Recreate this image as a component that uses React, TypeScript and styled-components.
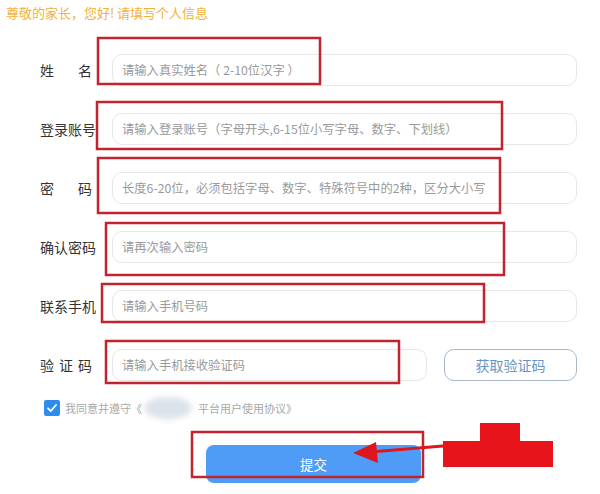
import React from "react";
import styled, { createGlobalStyle } from "styled-components";

const Global = createGlobalStyle`
  html, body { margin: 0; padding: 0; background: #fff; }
  body { font-family: "Noto Sans CJK SC", "Noto Sans", sans-serif; }
`;

const Page = styled.div`
  position: relative;
  width: 600px;
  height: 494px;
  overflow: hidden;
  background: #fff;
`;

const Header = styled.div`
  height: 26px;
  line-height: 26px;
  padding-left: 6px;
  font-size: 13px;
  color: #f2b13c;
  white-space: nowrap;
`;

const Form = styled.div`
  display: flex;
  flex-direction: column;
  gap: 27px;
  padding-top: 28px;
`;

const Row = styled.div`
  display: flex;
  align-items: center;
  height: 32px;
`;

const Label = styled.label<{ $spacing?: number }>`
  width: 72px;
  padding-left: 40px;
  flex: none;
  font-size: 14px;
  color: #333;
  white-space: nowrap;
  letter-spacing: ${(p) => p.$spacing ?? 0}px;
`;

const Input = styled.input<{ $w: number }>`
  box-sizing: border-box;
  width: ${(p) => p.$w}px;
  height: 32px;
  border: 1px solid #e7e7e7;
  border-radius: 10px;
  padding: 0 0 0 9px;
  font-family: inherit;
  font-size: 12.3px;
  color: #333;
  outline: none;
  background: #fff;
  &::placeholder { color: #9a9a9a; }
`;

const CodeButton = styled.button`
  box-sizing: border-box;
  margin-left: 17px;
  width: 133px;
  height: 32px;
  border: 1px solid #aab7c7;
  border-radius: 10px;
  background: #fff;
  color: #6995c4;
  font-family: inherit;
  font-size: 14px;
  padding: 0;
`;

const CheckRow = styled.div`
  display: flex;
  align-items: center;
  margin-top: 19px;
  padding-left: 44px;
  height: 16px;
  font-size: 11px;
  color: #a8a8a8;
  white-space: nowrap;
`;

const CheckBox = styled.span`
  width: 16px;
  height: 16px;
  border-radius: 2px;
  background: #2f8cec;
  display: inline-flex;
  align-items: center;
  justify-content: center;
  margin-right: 5px;
  flex: none;
`;

const Blur = styled.span`
  display: inline-block;
  width: 48px;
  height: 22px;
  margin: 0 6px 0 2px;
  border-radius: 50%;
  background: #dbe2ea;
  filter: blur(3px);
`;

const SubmitRow = styled.div`
  margin-top: 29px;
  padding-left: 206px;
`;

const Submit = styled.button`
  width: 215px;
  height: 38px;
  border: none;
  border-radius: 8px;
  background: #4f9cf6;
  color: #fff;
  font-family: inherit;
  font-size: 13.5px;
  padding: 0;
`;

const Overlay = styled.svg`
  position: absolute;
  left: 0;
  top: 0;
  pointer-events: none;
`;

const fields = [
  { label: "姓名", spacing: 24, ph: "请输入真实姓名（ 2-10位汉字 ）" },
  { label: "登录账号", spacing: 0, ph: "请输入登录账号（字母开头,6-15位小写字母、数字、下划线）" },
  { label: "密码", spacing: 24, ph: "长度6-20位，必须包括字母、数字、特殊符号中的2种，区分大小写" },
  { label: "确认密码", spacing: 0, ph: "请再次输入密码" },
  { label: "联系手机", spacing: 0, ph: "请输入手机号码" },
];

const boxes = [
  [98, 38, 222, 46],
  [97, 102, 405, 47],
  [98, 158, 402, 55],
  [106, 223, 398, 52],
  [102, 284, 382, 38],
  [106, 341, 293, 42],
  [192, 432, 231, 45],
];

export default function App() {
  return (
    <Page>
      <Global />
      <Header>尊敬的家长，您好! 请填写个人信息</Header>
      <Form>
        {fields.map((f) => (
          <Row key={f.label}>
            <Label $spacing={f.spacing}>{f.label}</Label>
            <Input $w={465} placeholder={f.ph} />
          </Row>
        ))}
        <Row>
          <Label $spacing={5}>验证码</Label>
          <Input $w={315} placeholder="请输入手机接收验证码" />
          <CodeButton>获取验证码</CodeButton>
        </Row>
      </Form>
      <CheckRow>
        <CheckBox>
          <svg width="12" height="12" viewBox="0 0 12 12">
            <path d="M2 6.3 L4.8 9 L10 3" fill="none" stroke="#fff" strokeWidth="1.8" strokeLinecap="round" strokeLinejoin="round" />
          </svg>
        </CheckBox>
        我同意并遵守《<Blur />平台用户使用协议》
      </CheckRow>
      <SubmitRow>
        <Submit>提交</Submit>
      </SubmitRow>
      <Overlay width="600" height="494" viewBox="0 0 600 494">
        {boxes.map(([x, y, w, h], i) => (
          <rect key={i} x={x} y={y} width={w} height={h} fill="none" stroke="#c1232f" strokeWidth="2.5" />
        ))}
        <line x1="443" y1="446" x2="370" y2="452" stroke="#e0161f" strokeWidth="3" />
        <polygon points="353,453 376,442 378,463" fill="#e0161f" />
        <polygon points="480,423 520,423 520,441 553,441 553,467 443,467 443,441 480,441" fill="#e8141c" />
      </Overlay>
    </Page>
  );
}
